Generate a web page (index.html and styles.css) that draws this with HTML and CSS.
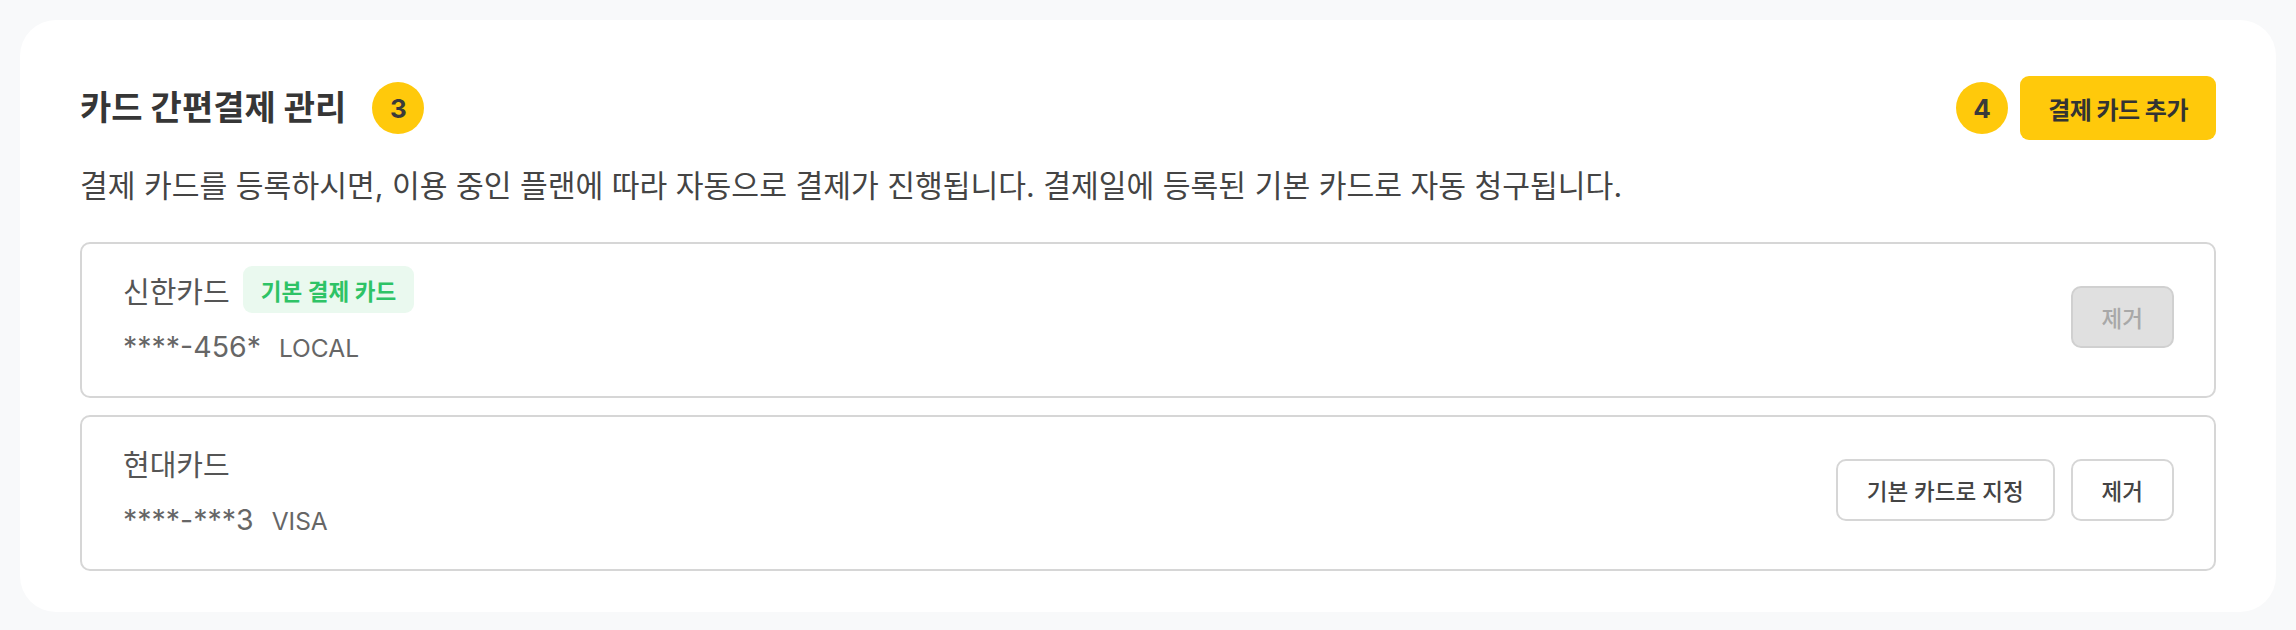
FILE: index.html
```html
<!DOCTYPE html>
<html lang="ko">
<head>
<meta charset="utf-8">
<title>카드 간편결제 관리</title>
<link rel="stylesheet" href="styles.css">
</head>
<body>
<section class="panel">
  <header class="panel-head">
    <div class="head-left">
      <h1 class="title">카드 간편결제 관리</h1>
      <span class="step">3</span>
    </div>
    <div class="head-right">
      <span class="step">4</span>
      <button class="btn-primary" type="button">결제 카드 추가</button>
    </div>
  </header>
  <p class="desc">결제 카드를 등록하시면, 이용 중인 플랜에 따라 자동으로 결제가 진행됩니다. 결제일에 등록된 기본 카드로 자동 청구됩니다.</p>
  <ul class="card-list">
    <li class="card-item">
      <div class="card-info">
        <div class="card-name-row">
          <span class="card-name">신한카드</span>
          <span class="badge-default">기본 결제 카드</span>
        </div>
        <div class="card-meta">
          <span class="card-number">****-456*</span>
          <span class="card-brand">LOCAL</span>
        </div>
      </div>
      <div class="card-actions">
        <button class="btn-outline btn-disabled" type="button" disabled>제거</button>
      </div>
    </li>
    <li class="card-item">
      <div class="card-info">
        <div class="card-name-row">
          <span class="card-name">현대카드</span>
        </div>
        <div class="card-meta">
          <span class="card-number">****-***3</span>
          <span class="card-brand">VISA</span>
        </div>
      </div>
      <div class="card-actions">
        <button class="btn-outline" type="button">기본 카드로 지정</button>
        <button class="btn-outline" type="button">제거</button>
      </div>
    </li>
  </ul>
</section>
</body>
</html>
```
FILE: styles.css
```css
* { box-sizing: border-box; }

html, body {
  margin: 0;
  padding: 0;
}

body {
  background: #f8f9fa;
  padding: 20px;
  font-family: Inter, "Noto Sans CJK KR", "Noto Sans", sans-serif;
  color: #333;
}

.panel {
  background: #ffffff;
  border-radius: 36px;
  padding: 56px 60px 41px;
}

.panel-head {
  display: flex;
  align-items: center;
  justify-content: space-between;
  height: 64px;
}

.head-left,
.head-right {
  display: flex;
  align-items: center;
}

.head-left { gap: 26px; }
.head-right { gap: 12px; }

.title {
  margin: 0;
  font-size: 34px;
  font-weight: 700;
  color: #363636;
  line-height: 1;
}

.step {
  width: 52px;
  height: 52px;
  border-radius: 50%;
  background: #ffc90b;
  color: #3a3a3a;
  font-weight: 700;
  font-size: 26px;
  display: flex;
  align-items: center;
  justify-content: center;
}

.btn-primary {
  height: 64px;
  padding: 0 28px;
  border: none;
  border-radius: 9px;
  background: #ffc90b;
  color: #333;
  font-family: inherit;
  font-weight: 700;
  font-size: 24px;
  letter-spacing: -0.5px;
}

.desc {
  margin: 26px 0 0;
  font-size: 30.2px;
  line-height: 40px;
  color: #444;
}

.card-list {
  list-style: none;
  margin: 36px 0 0;
  padding: 0;
  display: flex;
  flex-direction: column;
  gap: 17px;
}

.card-item {
  border: 2px solid #d6d6d6;
  border-radius: 10px;
  padding: 22px 40px 29px 41px;
  display: flex;
  align-items: center;
  justify-content: space-between;
  min-height: 154px;
}

.card-info {
  display: flex;
  flex-direction: column;
  gap: 15px;
}

.card-name-row {
  display: flex;
  align-items: center;
  gap: 13px;
  height: 47px;
}

.card-name {
  font-size: 29px;
  color: #555;
}

.badge-default {
  background: #eaf9ef;
  color: #2ec366;
  font-weight: 600;
  font-size: 22.5px;
  height: 47px;
  padding: 0 18px;
  border-radius: 9px;
  display: flex;
  align-items: center;
}

.card-meta {
  display: flex;
  align-items: baseline;
  gap: 18px;
  line-height: 38px;
}

.card-number {
  font-size: 28.5px;
  color: #666;
}

.card-brand {
  font-size: 24.5px;
  color: #666;
}

.card-actions {
  display: flex;
  align-items: center;
  gap: 16px;
}

.btn-outline {
  height: 62px;
  padding: 0 29px;
  border: 2px solid #d6d6d6;
  border-radius: 10px;
  background: #fff;
  color: #444;
  font-family: inherit;
  font-weight: 500;
  font-size: 22.5px;
}

.btn-disabled {
  background: #e0e0e0;
  border-color: #d0d0d0;
  color: #a8a8a8;
}
```
